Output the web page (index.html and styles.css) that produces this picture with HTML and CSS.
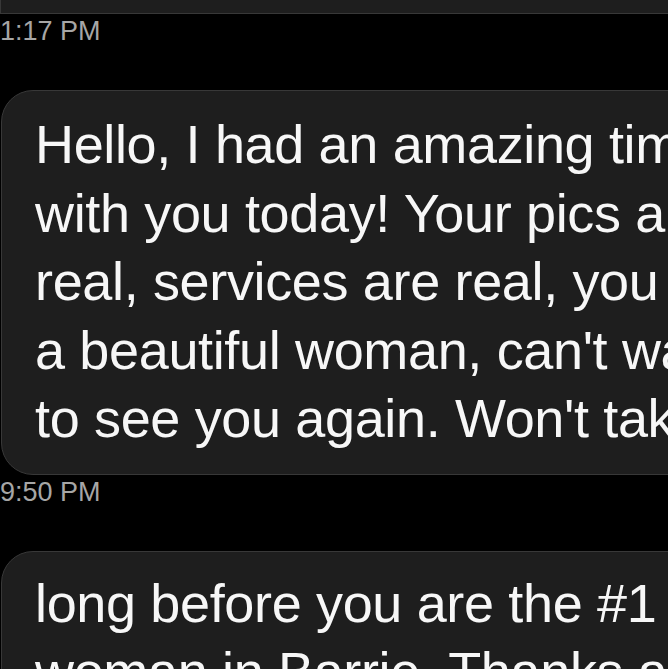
FILE: index.html
```html
<!DOCTYPE html>
<html lang="en">
<head>
    <meta charset="UTF-8">
    <meta name="viewport" content="width=device-width, initial-scale=1.0">
    <title>Messages</title>
    <link rel="stylesheet" href="styles.css">
</head>
<body>
    <div class="thread">
        <div class="bubble bubble-prev"></div>

        <div class="time">1:17 PM</div>
        <div class="bubble">
            <p class="line">Hello, I had an amazing time</p>
            <p class="line">with you today! Your pics are</p>
            <p class="line">real, services are real, you are</p>
            <p class="line">a beautiful woman, can't wait</p>
            <p class="line">to see you again. Won't take</p>
        </div>

        <div class="time">9:50 PM</div>
        <div class="bubble bubble-last">
            <p class="line">long before you are the #1</p>
            <p class="line">woman in Barrie. Thanks again</p>
        </div>
    </div>
</body>
</html>
```

FILE: styles.css
```css
body {
    margin: 0;
    padding: 0;
    background-color: #000;
    font-family: 'Liberation Sans', Arial, sans-serif;
    overflow: hidden;
}
.thread {
    display: flex;
    flex-direction: column;
    width: 668px;
    height: 669px;
    overflow: hidden;
}
.bubble {
    flex-shrink: 0;
    width: 900px;
    margin-left: 1px;
    padding: 19px 0 21px 33px;
    background-color: #1e1e1e;
    border: 1px solid #383838;
    border-radius: 32px 0 0 32px;
    color: #f7f7f7;
}
.bubble-prev {
    height: 13px;
    padding: 0;
    margin-left: 0;
    border-top: none;
    border-radius: 0;
}
.bubble-last {
    padding-top: 17px;
}
.line {
    margin: 0;
    font-size: 54px;
    line-height: 68.5px;
    letter-spacing: -0.35px;
    white-space: nowrap;
}
.time {
    margin: 2px 0 44px 0;
    font-size: 27px;
    line-height: 30px;
    color: #a6a6a6;
}
```
